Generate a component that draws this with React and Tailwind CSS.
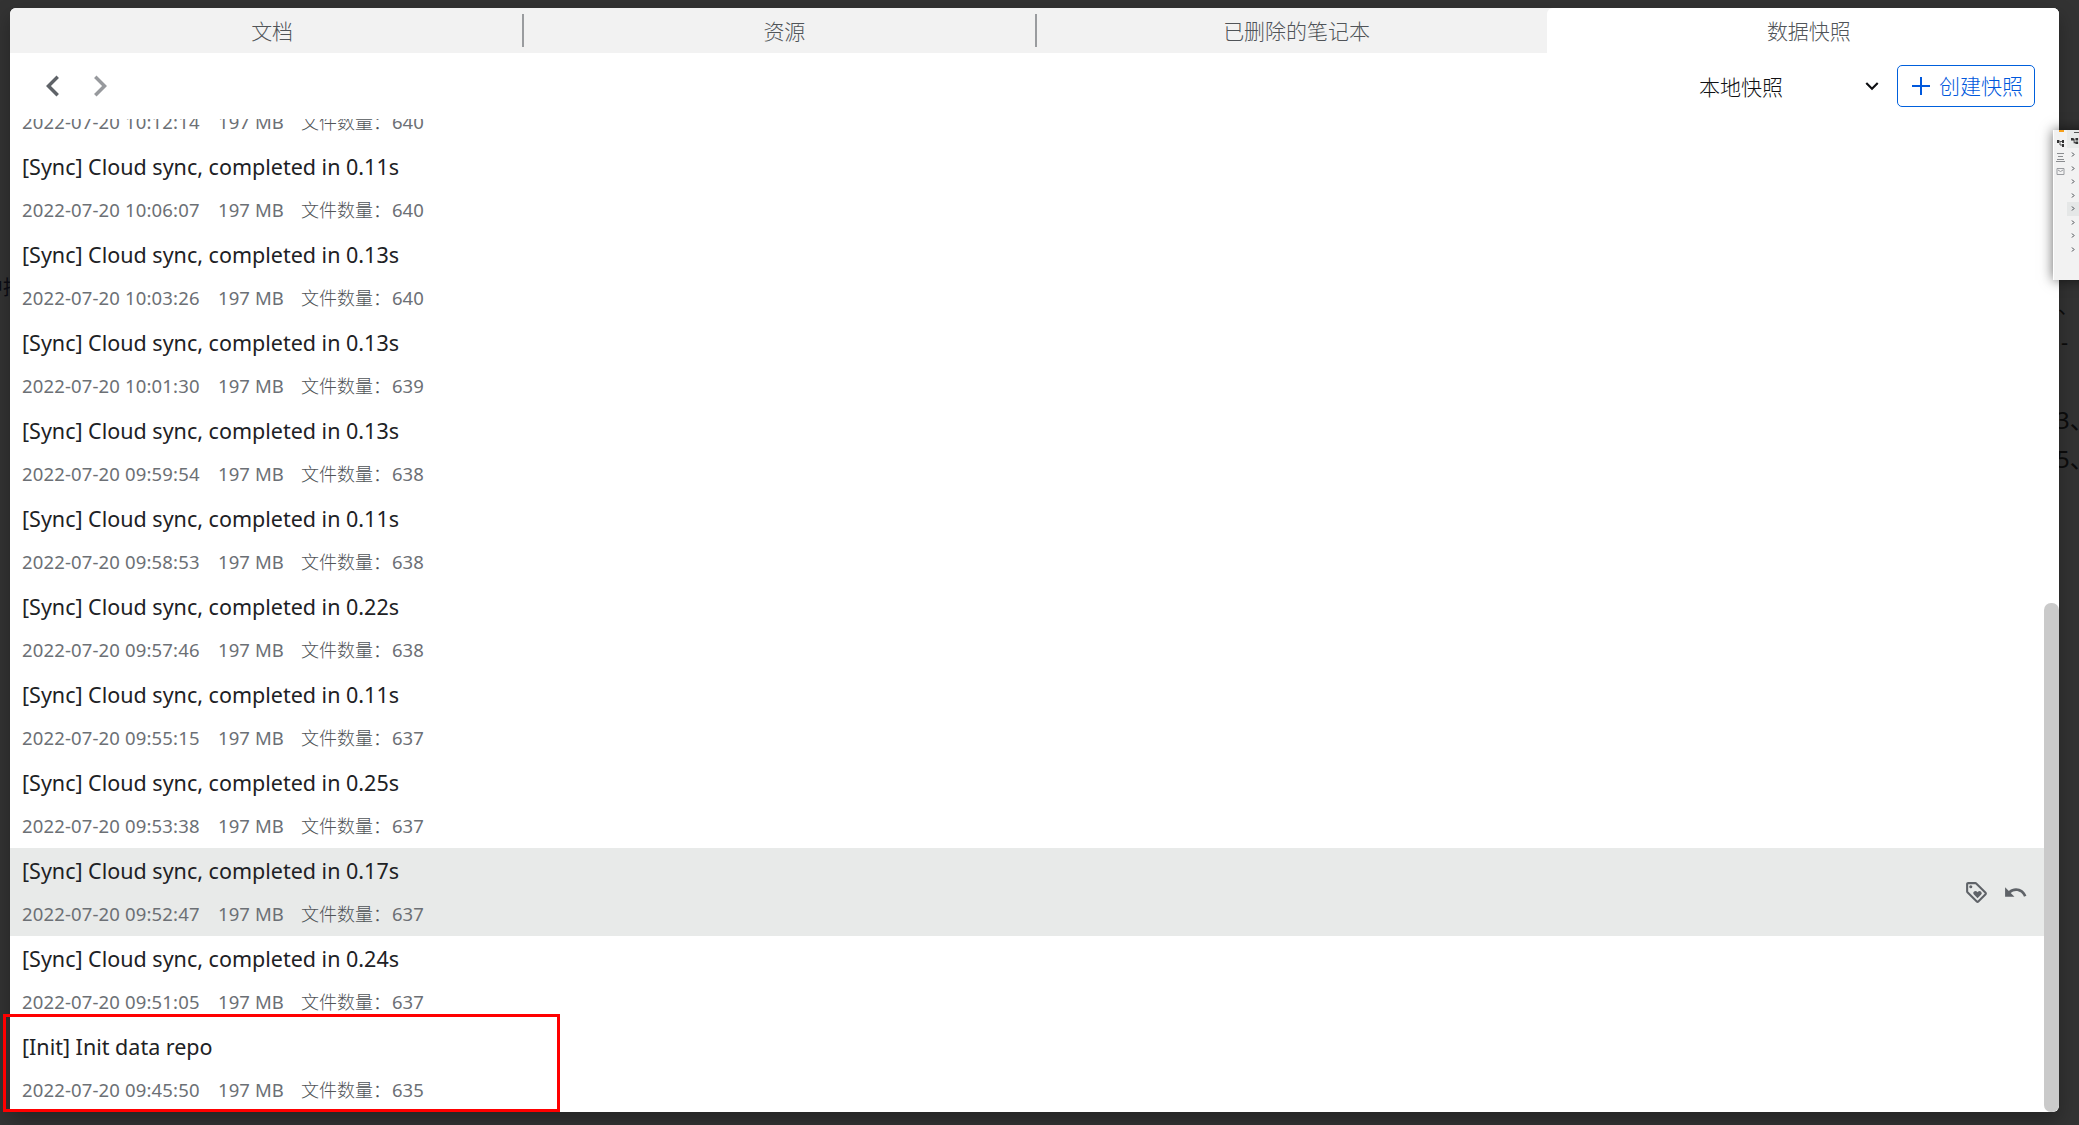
import React from "react";
import {
  MdChevronLeft,
  MdChevronRight,
  MdExpandMore,
  MdOutlineLoyalty,
  MdUndo,
} from "react-icons/md";

const tabs = ["文档", "资源", "已删除的笔记本", "数据快照"];

const snapshots = [
  { memo: "[Sync] Cloud sync, completed in 0.12s", time: "2022-07-20 10:12:14", count: 640 },
  { memo: "[Sync] Cloud sync, completed in 0.11s", time: "2022-07-20 10:06:07", count: 640 },
  { memo: "[Sync] Cloud sync, completed in 0.13s", time: "2022-07-20 10:03:26", count: 640 },
  { memo: "[Sync] Cloud sync, completed in 0.13s", time: "2022-07-20 10:01:30", count: 639 },
  { memo: "[Sync] Cloud sync, completed in 0.13s", time: "2022-07-20 09:59:54", count: 638 },
  { memo: "[Sync] Cloud sync, completed in 0.11s", time: "2022-07-20 09:58:53", count: 638 },
  { memo: "[Sync] Cloud sync, completed in 0.22s", time: "2022-07-20 09:57:46", count: 638 },
  { memo: "[Sync] Cloud sync, completed in 0.11s", time: "2022-07-20 09:55:15", count: 637 },
  { memo: "[Sync] Cloud sync, completed in 0.25s", time: "2022-07-20 09:53:38", count: 637 },
  { memo: "[Sync] Cloud sync, completed in 0.17s", time: "2022-07-20 09:52:47", count: 637, active: true },
  { memo: "[Sync] Cloud sync, completed in 0.24s", time: "2022-07-20 09:51:05", count: 637 },
  { memo: "[Init] Init data repo", time: "2022-07-20 09:45:50", count: 635 },
];

const Tabs = () => (
  <div className="flex h-[45px] shrink-0 bg-[#f2f2f2] text-[21px] font-light text-[#505458]">
    {tabs.map((tab, i) => (
      <div
        key={tab}
        className={
          i === 3
            ? "flex flex-1 items-center rounded-tl-[6px] bg-white"
            : "flex flex-1 items-center"
        }
      >
        {(i === 1 || i === 2) && <span className="h-[33px] w-[2px] bg-[#9a9c9f]" />}
        <span
          className={
            i === 1 || i === 2
              ? "flex-1 pt-0.5 pl-[10px] text-center"
              : "flex-1 pt-0.5 pl-[12px] text-center"
          }
        >
          {tab}
        </span>
      </div>
    ))}
  </div>
);

const Toolbar = () => (
  <div className="flex h-[66px] shrink-0 items-center pr-6 pl-[22px]">
    <MdChevronLeft className="size-[42px] text-[#5f6368]" />
    <MdChevronRight className="ml-[5px] size-[42px] text-[#97999d]" />
    <div className="ml-auto flex w-[186px] items-center justify-between text-[21px] font-light text-[#101114]">
      <span className="pt-[3px]">本地快照</span>
      <MdExpandMore className="size-[26px]" />
    </div>
    <button className="ml-3 flex h-[42px] w-[138px] items-center rounded-[5px] border border-[#0060dc] pl-3.5 text-[21px] font-light text-[#0058dc]">
      <svg className="mr-[9px] size-[18px] shrink-0" viewBox="0 0 18 18">
        <path d="M9 0v18M0 9h18" stroke="currentColor" strokeWidth="2" />
      </svg>
      <span className="pt-0.5">创建快照</span>
    </button>
  </div>
);

const Row = ({ item }) => (
  <li
    className={
      item.active
        ? "flex h-[88px] shrink-0 items-center bg-[#e8eae9] pr-4 pl-3"
        : "flex h-[88px] shrink-0 items-center pl-3"
    }
  >
    <div className="h-[86px] flex-1">
      <div className="h-[44px] text-[21.5px] leading-[43px] text-[#202124]">
        {item.memo}
      </div>
      <div className="flex h-[42px] text-[18.5px] leading-[42px] text-[#6c7075]">
        <span className="w-[196px] tracking-[0.15px]">{item.time}</span>
        <span className="w-[83px] tracking-[0.1px]">197 MB</span>
        <span className="w-[91px] text-[18px] font-light text-[#505458]">文件数量：</span>
        <span>{item.count}</span>
      </div>
    </div>
    {item.active && (
      <div className="flex gap-[14px] text-[#5f6368]">
        <MdOutlineLoyalty className="size-[25px]" />
        <MdUndo className="size-[25px]" />
      </div>
    )}
  </li>
);

const DockWindow = () => (
  <div className="absolute top-[130px] left-[2053px] flex h-[150px] w-[60px] border-l border-white bg-[#f2f2f2] shadow-[0_0_12px_rgba(0,0,0,0.6)]">
    <div className="flex w-[13px] flex-col items-center gap-[5px] pt-[9px] text-[#5f6368]">
      <svg className="size-[9px]" viewBox="0 0 9 9">
        <path d="M2 2h2v4h2M4 2.5h2" fill="none" stroke="#555" />
        <path d="M1 1h2v3H1zM6 1h2v3H6zM6 5h2v3H6z" fill="#333" />
      </svg>
      <svg className="size-[9px]" viewBox="0 0 9 9">
        <path d="M1 .5h7M2 3.5h5M1 6.5h7M0 8.5h9" stroke="#8a8c8f" />
      </svg>
      <svg className="size-[9px]" viewBox="0 0 9 9">
        <path d="M1 1.5h7v6H1zM2 3l2.500 1.500L7 3" fill="none" stroke="#9a9ca0" />
      </svg>
    </div>
    <div className="flex flex-1 flex-col">
      <div className="flex h-[18px] bg-[#e8eae9] pt-[7px] pl-1">
        <svg className="size-[8px]" viewBox="0 0 9 9">
          <path d="M0 1h3v3H0zM5 1h3v3H5zM5 5h3v3H5zM3 2h1v4h1v1H3z" fill="#333" />
        </svg>
      </div>
      {[0, 1, 2, 3, 4, 5, 6, 7].map((n) => (
        <div
          key={n}
          className={
            n === 4
              ? "flex h-[13.5px] items-center bg-[#e5e7e7] pl-1"
              : "flex h-[13.5px] items-center pl-1"
          }
        >
          <svg className="size-[5px]" viewBox="0 0 5 5">
            <path d="M1 .5l2 2-2 2" fill="none" stroke="#3f4348" />
          </svg>
        </div>
      ))}
    </div>
    <div className="absolute top-0 left-[5px] h-[2px] w-[5px] bg-[#f7a11a]" />
    <div className="absolute top-[2px] left-[20px] h-px w-[8px] bg-[#555]" />
  </div>
);

const App = () => {
  return (
    <div className="relative h-[1125px] w-[2079px] overflow-hidden bg-[#333333] px-[10px] pt-2 font-['Noto_Sans','Noto_Sans_CJK_SC',sans-serif]">
      {/* page text left behind the overlay */}
      <div className="absolute top-[273px] left-[-17px] text-[20px] whitespace-nowrap text-[#0c0c14]">
        中持
      </div>
      <div className="absolute top-[292px] left-[2058px] text-[20px] text-[#0c0c0c]">、</div>
      <div className="absolute top-[325px] left-[2061px] text-[22px] text-[#0c0c0c]">-</div>
      <div className="absolute top-[402px] left-[2056px] text-[24px] whitespace-nowrap text-[#0c0c0c]">
        3、
      </div>
      <div className="absolute top-[441px] left-[2056px] text-[24px] whitespace-nowrap text-[#0c0c0c]">
        5、
      </div>

      <div className="relative flex h-[1104px] w-[2049px] flex-col overflow-hidden rounded-t-[6px] rounded-br-[6px] bg-white shadow-[0_8px_20px_rgba(0,0,0,0.3)]">
        <Tabs />
        <Toolbar />
        <div className="flex min-h-0 flex-1">
          <ul className="flex flex-1 flex-col justify-end overflow-hidden">
            {snapshots.map((item) => (
              <Row key={item.time} item={item} />
            ))}
          </ul>
          <div className="flex w-[15px] flex-col justify-end">
            <div className="h-[509px] rounded-[7px] bg-[#cacaca]" />
          </div>
        </div>
      </div>

      <DockWindow />
      <div className="absolute top-[1014px] left-[3px] h-[98px] w-[557px] border-3 border-[#ff0000]" />
    </div>
  );
};

export default App;
